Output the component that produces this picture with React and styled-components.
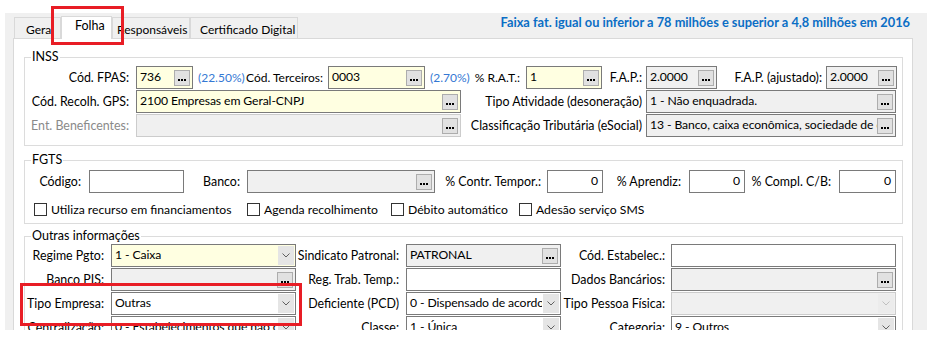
import React from "react";
import styled, { createGlobalStyle } from "styled-components";

const GlobalStyle = createGlobalStyle`
  html, body {
    margin: 0;
    padding: 0;
    background: #fff;
  }
  body {
    font-family: Lato, "Liberation Sans", Arial, sans-serif;
    font-size: 12.2px;
    color: #000;
  }
`;

const Screen = styled.div`
  position: relative;
  width: 927px;
  height: 341px;
  padding: 13px 0 11px 5px;
  box-sizing: border-box;
  overflow: hidden;
`;

const Window = styled.div`
  height: 100%;
  background: #f0f0f0;
  display: flex;
  flex-direction: column;
  overflow: hidden;
`;

const TabStrip = styled.div`
  height: 25px;
  flex-shrink: 0;
  display: flex;
  align-items: flex-end;
  padding-left: 9px;
`;

const Tab = styled.div`
  position: relative;
  z-index: ${p => (p.$active ? 1 : 0)};
  width: ${p => p.$w}px;
  height: ${p => (p.$active ? 23 : 21)}px;
  margin-bottom: ${p => (p.$active ? -1 : 0)}px;
  padding: ${p => (p.$active ? 1 : 4)}px 0 0 ${p => p.$pl}px;
  box-sizing: border-box;
  border: 1px solid #d9d9d9;
  border-bottom: none;
  background: ${p => (p.$active ? "#fff" : "#f0f0f0")};
  font-size: ${p => (p.$active ? 12.5 : 12)}px;
  line-height: 15px;
  white-space: nowrap;
  overflow: hidden;
  flex-shrink: 0;
`;

const Notice = styled.div`
  margin-left: auto;
  align-self: flex-start;
  margin-top: 2px;
  padding-right: 17px;
  font-size: 12.8px;
  line-height: 15px;
  font-weight: bold;
  color: #0b6ec5;
  white-space: nowrap;
`;

const Page = styled.div`
  flex: 1;
  margin-left: 8px;
  width: 900px;
  box-sizing: border-box;
  background: #fff;
  border: 1px solid #d9d9d9;
  padding: 11px 0 0 10px;
`;

const Group = styled.fieldset`
  margin: ${p => p.$mt || 0}px 0 0 0;
  width: 879px;
  min-width: 0;
  box-sizing: border-box;
  border: 1px solid #dcdcdc;
  padding: ${p => p.$pt}px 0 ${p => p.$pb}px 0;
`;

const Legend = styled.legend`
  margin-left: 6px;
  padding: 0 1px;
  font-size: 12.5px;
  line-height: 14px;
`;

const Row = styled.div`
  display: flex;
  align-items: center;
  height: 23px;
  margin-top: ${p => p.$mt || 0}px;
`;

const Label = styled.div`
  width: ${p => p.$w}px;
  flex-shrink: 0;
  box-sizing: border-box;
  display: flex;
  align-items: center;
  justify-content: ${p => (p.$split ? "space-between" : "flex-end")};
  padding: 0 ${p => p.$pr ?? 7}px 0 ${p => p.$pl || 0}px;
  white-space: nowrap;
  font-size: ${p => (p.$split ? 12 : 12.4)}px;
  color: ${p => (p.$disabled ? "#8a8a8a" : "#000")};
`;

const Percent = styled.span`
  color: #3478d4;
`;

const fieldBg = {
  white: "#fff",
  yellow: "#ffffe1",
  gray: "#f0f0f0",
};

const Field = styled.div`
  width: ${p => p.$w}px;
  height: 23px;
  flex-shrink: 0;
  box-sizing: border-box;
  display: flex;
  align-items: center;
  border: 1px solid ${p => (p.$disabled ? "#cccccc" : "#7a7a7a")};
  background: ${p => fieldBg[p.$bg || "white"]};
`;

const FieldText = styled.span`
  flex: 1;
  min-width: 0;
  overflow: hidden;
  white-space: nowrap;
  padding: 0 ${p => (p.$right ? 4 : 0)}px 1px 3px;
  text-align: ${p => (p.$right ? "right" : "left")};
  font-size: 12.2px;
  letter-spacing: -0.1px;
  line-height: 20px;
`;

const DotsButton = styled.div`
  width: 16px;
  height: 16px;
  margin-right: 2px;
  flex-shrink: 0;
  box-sizing: border-box;
  background: #e1e1e1;
  border: 1px solid #adadad;
  display: flex;
`;

const ArrowButton = styled.div`
  width: 16px;
  align-self: stretch;
  margin: 1px;
  flex-shrink: 0;
  background: ${p => (p.$disabled ? "#ececec" : "#e5e5e5")};
  display: flex;
  align-items: center;
  justify-content: center;
`;

const CheckRow = styled.div`
  display: flex;
  align-items: center;
  height: 16px;
  margin-top: 8px;
  padding-left: 9px;
`;

const CheckItem = styled.label`
  display: flex;
  align-items: center;
  width: ${p => (p.$w ? `${p.$w}px` : "auto")};
  flex-shrink: 0;
  white-space: nowrap;
`;

const CheckBox = styled.span`
  width: 13px;
  height: 13px;
  margin-right: 4px;
  box-sizing: border-box;
  border: 1px solid #333;
  background: #fff;
`;

const Highlight = styled.div`
  position: absolute;
  z-index: 5;
  left: ${p => p.$x}px;
  top: ${p => p.$y}px;
  width: ${p => p.$w}px;
  height: ${p => p.$h}px;
  box-sizing: border-box;
  border: 3px solid #e81d25;
  pointer-events: none;
`;

const Dots = () => (
  <svg width="14" height="14" viewBox="0 0 14 14">
    <rect x="3" y="8" width="2" height="2" fill="#000" />
    <rect x="6" y="8" width="2" height="2" fill="#000" />
    <rect x="9" y="8" width="2" height="2" fill="#000" />
  </svg>
);

const Chevron = ({ disabled }) => (
  <svg width="8" height="5" viewBox="0 0 8 5">
    <polyline
      points="0.5,0.5 4,4 7.5,0.5"
      fill="none"
      stroke={disabled ? "#c0c0c0" : "#606060"}
      strokeWidth="1"
    />
  </svg>
);

const Input = ({ w, bg, disabled, value, right, dots }) => (
  <Field $w={w} $bg={bg} $disabled={disabled}>
    <FieldText $right={right}>{value}</FieldText>
    {dots && (
      <DotsButton>
        <Dots />
      </DotsButton>
    )}
  </Field>
);

const Combo = ({ w, bg, disabled, value }) => (
  <Field $w={w} $bg={bg} $disabled={disabled}>
    <FieldText>{value}</FieldText>
    <ArrowButton $disabled={disabled}>
      <Chevron disabled={disabled} />
    </ArrowButton>
  </Field>
);

const Check = ({ w, children }) => (
  <CheckItem $w={w}>
    <CheckBox />
    {children}
  </CheckItem>
);

export default function App() {
  return (
    <>
      <GlobalStyle />
      <Screen>
        <Window>
          <TabStrip>
            <Tab $w={47} $pl={11}>Geral</Tab>
            <Tab $w={51} $pl={13} $active>Folha</Tab>
            <Tab $w={78} $pl={4}>Responsáveis</Tab>
            <Tab $w={108} $pl={9}>Certificado Digital</Tab>
            <Notice>
              Faixa fat. igual ou inferior a 78 milhões e superior a 4,8 milhões em 2016
            </Notice>
          </TabStrip>

          <Page>
            <Group $pt={2} $pb={8}>
              <Legend>INSS</Legend>
              <Row>
                <Label $w={111}>Cód. FPAS:</Label>
                <Input w={57} bg="yellow" value="736" dots />
                <Label $w={135} $split $pl={5} $pr={5}>
                  <Percent>(22.50%)</Percent>
                  <span>Cód. Terceiros:</span>
                </Label>
                <Input w={97} bg="yellow" value="0003" dots />
                <Label $w={101} $split $pl={5} $pr={6}>
                  <Percent>(2.70%)</Percent>
                  <span>% R.A.T.:</span>
                </Label>
                <Input w={76} bg="yellow" value="1" dots />
                <Label $w={44} $pr={4}>F.A.P.:</Label>
                <Input w={71} bg="gray" value="2.0000" dots />
                <Label $w={109} $pr={4}>F.A.P. (ajustado):</Label>
                <Input w={71} bg="gray" value="2.0000" dots />
              </Row>
              <Row $mt={1}>
                <Label $w={111}>Cód. Recolh. GPS:</Label>
                <Input w={325} bg="yellow" value="2100 Empresas em Geral-CNPJ" dots />
                <Label $w={185} $pr={4}>Tipo Atividade (desoneração)</Label>
                <Input w={250} bg="gray" value="1 - Não enquadrada." dots />
              </Row>
              <Row $mt={1}>
                <Label $w={111} $disabled>Ent. Beneficentes:</Label>
                <Input w={325} bg="gray" disabled value="" dots />
                <Label $w={185} $pr={4}>Classificação Tributária (eSocial)</Label>
                <Input
                  w={250}
                  bg="gray"
                  value="13 - Banco, caixa econômica, sociedade de crédito"
                  dots
                />
              </Row>
            </Group>

            <Group $mt={7} $pt={3} $pb={6}>
              <Legend>FGTS</Legend>
              <Row>
                <Label $w={64} $pr={8}>Código:</Label>
                <Input w={95} value="" />
                <Label $w={63}>Banco:</Label>
                <Input w={188} bg="gray" value="" dots />
                <Label $w={112} $pr={6}>% Contr. Tempor.:</Label>
                <Input w={56} value="0" right />
                <Label $w={86} $pr={8}>% Aprendiz:</Label>
                <Input w={56} value="0" right />
                <Label $w={94} $pr={8}>% Compl. C/B:</Label>
                <Input w={57} value="0" right />
              </Row>
              <CheckRow>
                <Check w={213}>Utiliza recurso em financiamentos</Check>
                <Check w={144}>Agenda recolhimento</Check>
                <Check w={128}>Débito automático</Check>
                <Check>Adesão serviço SMS</Check>
              </CheckRow>
            </Group>

            <Group $mt={5} $pt={1} $pb={8}>
              <Legend>Outras informações</Legend>
              <Row>
                <Label $w={86}>Regime Pgto:</Label>
                <Combo w={185} bg="yellow" value="1 - Caixa" />
                <Label $w={110}>Sindicato Patronal:</Label>
                <Input w={155} bg="gray" value="PATRONAL" dots />
                <Label $w={110} $pr={6}>Cód. Estabelec.:</Label>
                <Input w={225} value="" />
              </Row>
              <Row $mt={1}>
                <Label $w={86}>Banco PIS:</Label>
                <Input w={185} bg="gray" value="" dots />
                <Label $w={110}>Reg. Trab. Temp.:</Label>
                <Input w={155} value="" />
                <Label $w={110} $pr={6}>Dados Bancários:</Label>
                <Input w={225} bg="gray" value="" dots />
              </Row>
              <Row $mt={1}>
                <Label $w={86}>Tipo Empresa:</Label>
                <Combo w={185} value="Outras" />
                <Label $w={110}>Deficiente (PCD)</Label>
                <Combo w={155} value="0 - Dispensado de acordo" />
                <Label $w={110} $pr={6}>Tipo Pessoa Física:</Label>
                <Combo w={225} bg="gray" disabled value="" />
              </Row>
              <Row $mt={1}>
                <Label $w={86}>Centralização:</Label>
                <Combo w={185} value="0 - Estabelecimentos que não centralizam" />
                <Label $w={110}>Classe:</Label>
                <Combo w={155} value="1 - Única" />
                <Label $w={110} $pr={6}>Categoria:</Label>
                <Combo w={225} value="9 -  Outros" />
              </Row>
            </Group>
          </Page>
        </Window>

        <Highlight $x={51} $y={6} $w={73} $h={39} />
        <Highlight $x={20} $y={283} $w={282} $h={43} />
      </Screen>
    </>
  );
}
